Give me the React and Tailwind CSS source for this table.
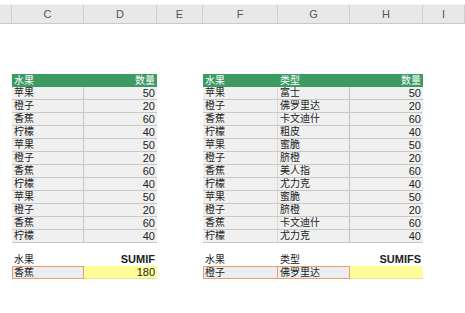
import React from "react";

const fruits = [
  ["苹果", "富士", 50],
  ["橙子", "佛罗里达", 20],
  ["香蕉", "卡文迪什", 60],
  ["柠檬", "粗皮", 40],
  ["苹果", "蜜脆", 50],
  ["橙子", "脐橙", 20],
  ["香蕉", "美人指", 60],
  ["柠檬", "尤力克", 40],
  ["苹果", "蜜脆", 50],
  ["橙子", "脐橙", 20],
  ["香蕉", "卡文迪什", 60],
  ["柠檬", "尤力克", 40],
];

const cols = [
  { label: "", w: "w-[12px]" },
  { label: "C", w: "w-[72px]" },
  { label: "D", w: "w-[73px]" },
  { label: "E", w: "w-[46px]" },
  { label: "F", w: "w-[75px]" },
  { label: "G", w: "w-[72px]" },
  { label: "H", w: "w-[73px]" },
  { label: "I", w: "flex-1" },
];

const font = { fontFamily: '"Liberation Sans", "Noto Sans CJK SC", sans-serif' };

export default function App() {
  return (
    <div className="w-[465px] h-[313px] bg-white text-[10px] text-[#222]" style={font}>
      {/* column header bar */}
      <div className="pt-[4px]">
        <div className="flex h-[20px] bg-[#e8e8e8] border-t border-[#f4f4f4] border-b border-b-[#c9c9c9]">
          {cols.map((c, i) => (
            <div
              key={i}
              className={`${c.w} border-r border-[#cfcfcf] flex items-center justify-center text-[11px] text-[#555]`}
            >
              {c.label}
            </div>
          ))}
        </div>
      </div>

      <div className="flex pl-[12px] pt-[50px]">
        {/* SUMIF table */}
        <div className="w-[145px]">
          <div className="flex h-[13px] bg-[#3c9a62] text-white items-center">
            <div className="w-[72px] pl-[2px]">水果</div>
            <div className="flex-1 text-right pr-[2px]">数量</div>
          </div>
          {fruits.map((r, i) => (
            <div key={i} className="flex h-[13px] bg-[#f0f0f0] border-b border-[#c8c8c8] items-center leading-none">
              <div className="w-[72px] h-full flex items-center pl-[2px] border-r border-[#c8c8c8]">{r[0]}</div>
              <div className="flex-1 text-right pr-[2px] text-[11px]">{r[2]}</div>
            </div>
          ))}
          <div className="flex h-[13px] mt-[10px] items-center">
            <div className="w-[72px] pl-[2px]">水果</div>
            <div className="flex-1 text-right pr-[2px] text-[11px] font-bold">SUMIF</div>
          </div>
          <div className="flex h-[13px] items-stretch">
            <div className="w-[72px] bg-[#ecedf3] border border-[#ee9a66] pl-[1px] flex items-center">香蕉</div>
            <div className="flex-1 bg-[#fffd98] border-b border-[#e4e2a0] text-right pr-[2px] text-[11px] flex items-center justify-end">180</div>
          </div>
        </div>

        {/* SUMIFS table */}
        <div className="w-[220px] ml-[46px]">
          <div className="flex h-[13px] bg-[#3c9a62] text-white items-center">
            <div className="w-[75px] pl-[2px]">水果</div>
            <div className="w-[72px] pl-[2px]">类型</div>
            <div className="flex-1 text-right pr-[2px]">数量</div>
          </div>
          {fruits.map((r, i) => (
            <div key={i} className="flex h-[13px] bg-[#f0f0f0] border-b border-[#c8c8c8] items-center leading-none">
              <div className="w-[75px] h-full flex items-center pl-[2px] border-r border-[#d8d8d8]">{r[0]}</div>
              <div className="w-[72px] h-full flex items-center pl-[2px] border-r border-[#c0c0c0]">{r[1]}</div>
              <div className="flex-1 text-right pr-[2px] text-[11px]">{r[2]}</div>
            </div>
          ))}
          <div className="flex h-[13px] mt-[10px] items-center">
            <div className="w-[75px] pl-[2px]">水果</div>
            <div className="w-[72px] pl-[2px]">类型</div>
            <div className="flex-1 text-right pr-[2px] text-[11px] font-bold">SUMIFS</div>
          </div>
          <div className="flex h-[13px] items-stretch">
            <div className="w-[75px] bg-[#ecedf3] border border-[#ee9a66] pl-[1px] flex items-center">橙子</div>
            <div className="w-[72px] bg-[#ecedf3] border border-l-0 border-[#ee9a66] pl-[2px] flex items-center">佛罗里达</div>
            <div className="flex-1 bg-[#fffd98] border-b border-[#e4e2a0]"></div>
          </div>
        </div>
      </div>
    </div>
  );
}
